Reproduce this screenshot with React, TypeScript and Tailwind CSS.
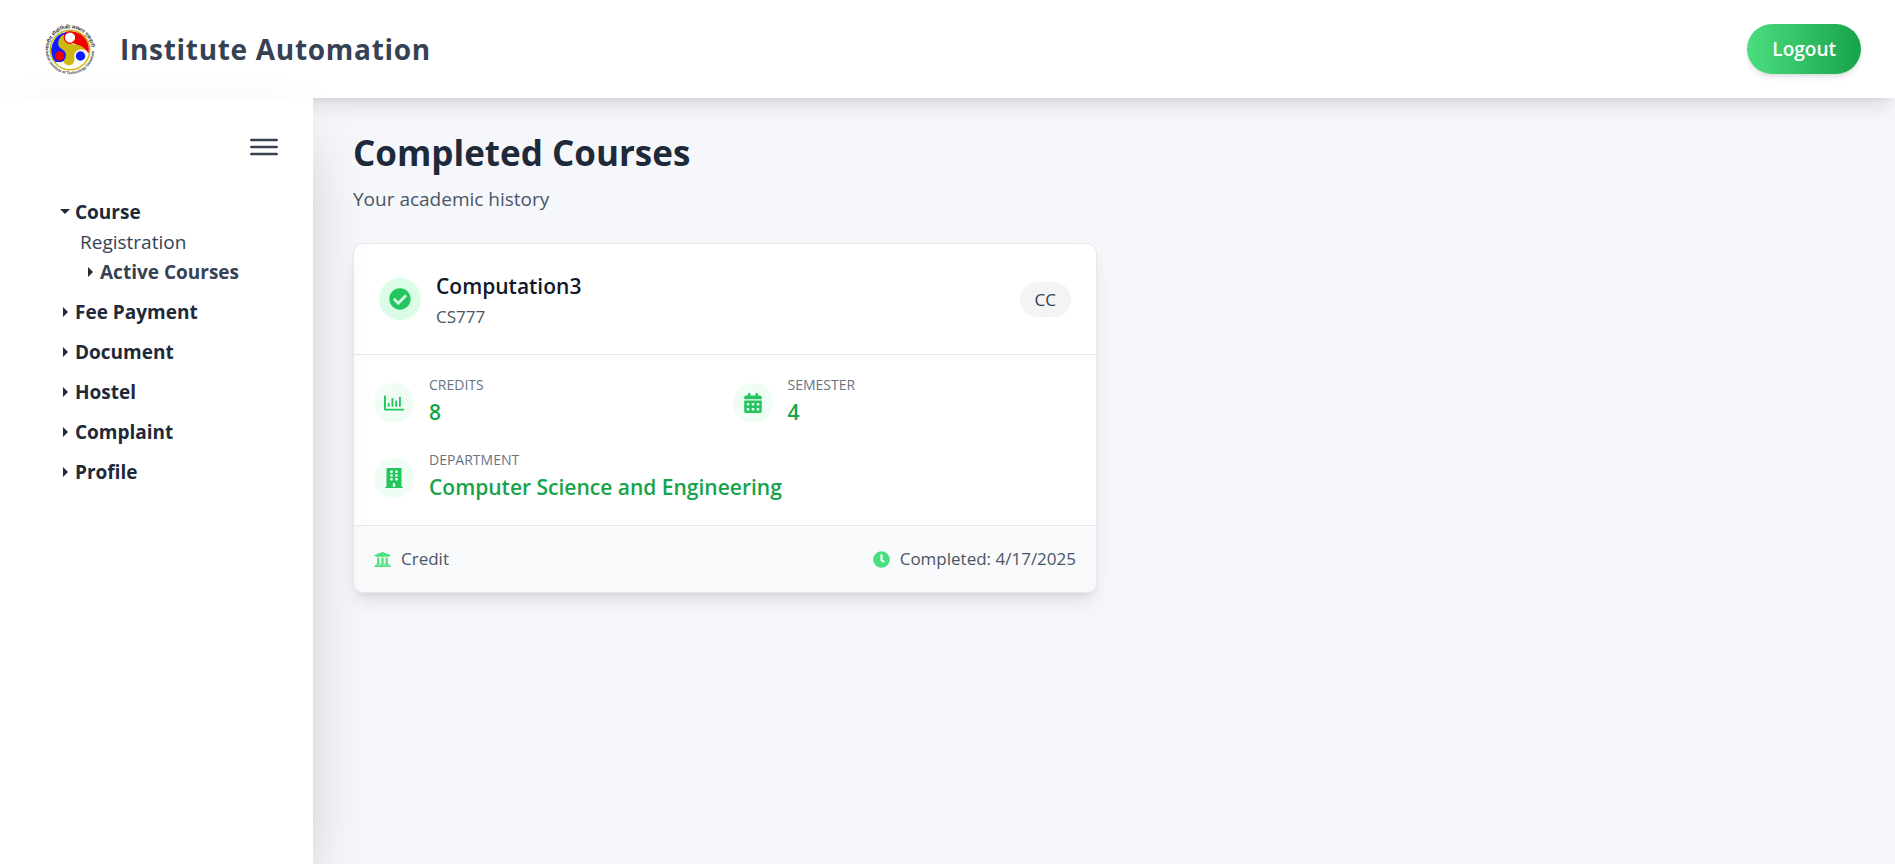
import React from "react";
import {
  FaBuilding,
  FaCalendarAlt,
  FaCheckCircle,
  FaClock,
  FaRegChartBar,
  FaUniversity,
} from "react-icons/fa";

function Logo() {
  return (
    <svg viewBox="-2 -2 104 108" className="h-[54px] w-[52px]" role="img" aria-label="Institute seal">
      <defs>
        <path id="seal-top" d="M 8 60 A 42.5 42.5 0 1 1 92 60" />
        <path id="seal-bottom" d="M 1.5 54 A 48.5 48.5 0 0 0 98.5 54" />
      </defs>
      <text fontSize="9.5" fontWeight="700" fill="#444" fontFamily="Noto Sans, sans-serif">
        <textPath href="#seal-top" startOffset="3%">भारतीय प्रौद्योगिकी संस्थान गुवाहाटी</textPath>
      </text>
      <text fontSize="7.8" fontWeight="700" fill="#444" fontFamily="Liberation Sans, sans-serif">
        <textPath href="#seal-bottom" startOffset="1%">Indian Institute of Technology Guwahati</textPath>
      </text>
      <circle cx="50" cy="54" r="39.5" fill="#fff" stroke="#cdb80f" strokeWidth="3" />
      <path d="M44 18 A37 37 0 0 0 21 78 L38 76 L44 58 L30 38 Z" fill="#0d1cff" />
      <path d="M40 18 A37 37 0 0 1 87 61 C79 46 66 46 58 41 L42 31 Z" fill="#f20000" />
      <path
        d="M38 22 C26 28 22 46 33 52 C41 56 44 62 38 70 C35 82 44 86 52 84 C61 80 58 72 60 65 C62 54 71 50 81 56 C75 43 63 43 52 42 C42 40 36 34 38 22 Z"
        fill="#cdb80f"
      />
      <circle cx="50" cy="29" r="11.5" fill="#fff" stroke="#f20000" strokeWidth="2.5" />
      <circle cx="29" cy="66" r="11" fill="#f20000" stroke="#0d1cff" strokeWidth="3" />
      <circle cx="71" cy="66" r="11" fill="#0d1cff" stroke="#fff" strokeWidth="3" />
    </svg>
  );
}

function Caret({ open = false }: { open?: boolean }) {
  return (
    <svg viewBox="0 0 12 12" className="h-3 w-3 shrink-0" aria-hidden="true">
      {open ? <path d="M1 3h10L6 8z" fill="#1f2937" /> : <path d="M4 1v10l5-5z" fill="#1f2937" />}
    </svg>
  );
}

function MenuGroup({ label, open }: { label: string; open?: boolean }) {
  return (
    <button
      type="button"
      aria-expanded={!!open}
      className="flex items-center gap-1 text-[19px] leading-[30px] font-bold text-gray-800"
    >
      <Caret open={open} />
      {label}
    </button>
  );
}

function Sidebar() {
  return (
    <aside className="relative z-10 w-[313px] shrink-0 bg-white px-[35px] pt-[31px] shadow-[0_31px_62px_-15px_rgba(0,0,0,0.25)]">
      <div className="flex justify-end">
        <button type="button" aria-label="Toggle menu" className="flex h-9 w-7 items-center">
          <svg viewBox="0 0 28 20" className="h-5 w-7" stroke="#374151" strokeWidth="2.5" strokeLinecap="round">
            <path d="M1.3 3h25.4M1.3 10h25.4M1.3 17h25.4" />
          </svg>
        </button>
      </div>
      <nav className="pt-8 pl-6">
        <ul className="flex flex-col gap-[10px]">
          <li>
            <MenuGroup label="Course" open />
            <ul className="pl-[21px]">
              <li>
                <a href="#registration" className="text-[19px] leading-[30px] text-gray-700">
                  Registration
                </a>
              </li>
              <li>
                <button
                  type="button"
                  aria-expanded={false}
                  className="flex items-center gap-1 pl-1 text-[19px] leading-[30px] font-bold text-gray-700"
                >
                  <Caret />
                  Active Courses
                </button>
              </li>
            </ul>
          </li>
          {["Fee Payment", "Document", "Hostel", "Complaint", "Profile"].map((label) => (
            <li key={label}>
              <MenuGroup label={label} />
            </li>
          ))}
        </ul>
      </nav>
    </aside>
  );
}

function Stat({
  icon,
  label,
  value,
  wide,
}: {
  icon: React.ReactNode;
  label: string;
  value: string;
  wide?: boolean;
}) {
  return (
    <div className={wide ? "col-span-2 flex items-center gap-[15px]" : "flex items-center gap-[15px]"}>
      <span className="flex h-10 w-10 shrink-0 items-center justify-center rounded-full bg-green-50 text-xl text-[#22c55e]">
        {icon}
      </span>
      <dl>
        <dt className="text-sm leading-5 text-gray-500 uppercase">{label}</dt>
        <dd className="text-[21px] leading-[35px] font-semibold text-[#16a34a]">{value}</dd>
      </dl>
    </div>
  );
}

function CourseCard() {
  return (
    <article className="w-full max-w-[744px] overflow-hidden rounded-[10px] border border-gray-200 bg-white shadow-[0_12px_19px_-4px_rgba(0,0,0,0.1),0_5px_8px_-5px_rgba(0,0,0,0.1)]">
      <div className="flex items-center justify-between p-[25px]">
        <div className="flex items-center gap-[15px]">
          <span className="flex h-[42px] w-[42px] items-center justify-center rounded-full bg-green-100 text-[22px] text-[#22c55e]">
            <FaCheckCircle />
          </span>
          <div>
            <h2 className="text-[21px] leading-[35px] font-semibold text-gray-900">Computation3</h2>
            <p className="text-[17px] leading-[25px] text-gray-600">CS777</p>
          </div>
        </div>
        <span className="rounded-full bg-gray-100 px-[15px] py-[5px] text-[17px] leading-[25px] font-medium text-gray-700">
          CC
        </span>
      </div>
      <div className="grid grid-cols-2 gap-x-[15px] gap-y-5 border-y border-gray-200 p-5">
        <Stat icon={<FaRegChartBar />} label="Credits" value="8" />
        <Stat icon={<FaCalendarAlt />} label="Semester" value="4" />
        <Stat icon={<FaBuilding />} label="Department" value="Computer Science and Engineering" wide />
      </div>
      <div className="flex items-center justify-between bg-gray-50 p-5 text-[17px] leading-[26px] text-gray-600">
        <span className="flex items-center gap-[10px]">
          <FaUniversity className="text-[#4ade80]" />
          Credit
        </span>
        <span className="flex items-center gap-[10px]">
          <FaClock className="text-[#4ade80]" />
          Completed: 4/17/2025
        </span>
      </div>
    </article>
  );
}

export default function App() {
  return (
    <div className="flex min-h-screen flex-col bg-[#f5f7fb] font-['Open_Sans','Noto_Sans',sans-serif]">
      <header className="relative z-[5] flex h-[98px] shrink-0 items-center justify-between bg-white pr-[34px] pl-11 shadow-[0_12px_19px_-4px_rgba(0,0,0,0.1),0_5px_8px_-5px_rgba(0,0,0,0.1)]">
        <div className="flex items-center gap-6">
          <Logo />
          <h1 className="text-[28px] leading-[40px] font-bold tracking-wide text-gray-700">Institute Automation</h1>
        </div>
        <button
          type="button"
          className="h-[50px] rounded-full bg-linear-to-r from-[#4ade80] to-[#16a34a] px-[25px] text-[19px] font-semibold text-white shadow-md"
        >
          Logout
        </button>
      </header>
      <div className="flex flex-1">
        <Sidebar />
        <main className="min-w-0 flex-1 px-10 pt-[30px]">
          <h1 className="text-[35px] leading-[50px] font-bold text-gray-800">Completed Courses</h1>
          <p className="mt-[6px] mb-[29px] text-[19px] leading-[30px] text-gray-600">Your academic history</p>
          <CourseCard />
        </main>
      </div>
    </div>
  );
}
